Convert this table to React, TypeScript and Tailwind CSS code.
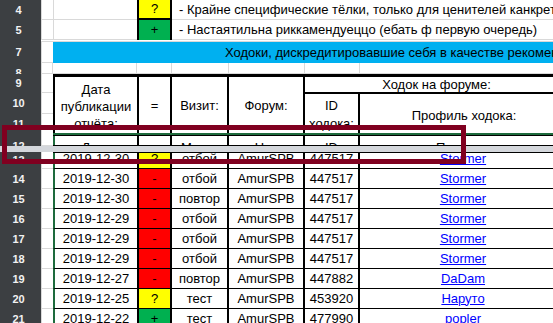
import React from "react";

const FONT = { fontFamily: '"Liberation Sans", Arial, sans-serif' };

function RowHdr({ n, h = "h-[20px]", align = "items-center" }: { n: string; h?: string; align?: string }) {
  return (
    <div
      className={`w-[41px] shrink-0 ${h} bg-[#3c3f42] text-[#f2f2f2] font-bold text-[11px] flex ${align} justify-center pr-[4px] overflow-hidden`}
    >
      <div className="h-[20px] shrink-0 flex items-center">{n}</div>
    </div>
  );
}

function ColA({ h = "h-[20px]" }: { h?: string }) {
  return <div className={`w-[12px] shrink-0 ${h} bg-white border-l border-[#d9d9d9] border-b`} />;
}

type RowData = { n: string; date: string; mark: string; visit: string; id: string; name: string };

function Cells({ r }: { r: RowData }) {
  const markBg = r.mark === "?" ? "bg-[#ffff00]" : r.mark === "+" ? "bg-[#00b050]" : "bg-[#ff0000]";
  const cell = "h-[20px] shrink-0 flex items-center justify-center border-b border-black border-r-2 border-r-black";
  return (
    <div className="flex">
      <div className={`${cell} w-[86px] border-l-2 border-l-[#1e6b3d]`}>{r.date}</div>
      <div className={`${cell} w-[33px] ${markBg}`}>{r.mark}</div>
      <div className={`${cell} w-[57px]`}>{r.visit}</div>
      <div className={`${cell} w-[76px]`}>AmurSPB</div>
      <div className={`${cell} w-[55px]`}>{r.id}</div>
      <div className={`${cell} w-[208px]`}>
        <span className="text-[#0000ff] underline">{r.name}</span>
      </div>
    </div>
  );
}

function DataRow({ r }: { r: RowData }) {
  return (
    <div className="flex h-[20px]">
      <RowHdr n={r.n} />
      <ColA />
      <Cells r={r} />
    </div>
  );
}

const rows: RowData[] = [
  { n: "14", date: "2019-12-30", mark: "-", visit: "отбой", id: "447517", name: "Stormer" },
  { n: "15", date: "2019-12-30", mark: "-", visit: "повтор", id: "447517", name: "Stormer" },
  { n: "16", date: "2019-12-29", mark: "-", visit: "отбой", id: "447517", name: "Stormer" },
  { n: "17", date: "2019-12-29", mark: "-", visit: "отбой", id: "447517", name: "Stormer" },
  { n: "18", date: "2019-12-29", mark: "-", visit: "отбой", id: "447517", name: "Stormer" },
  { n: "19", date: "2019-12-27", mark: "-", visit: "повтор", id: "447882", name: "DaDam" },
  { n: "20", date: "2019-12-25", mark: "?", visit: "тест", id: "453920", name: "Наруто" },
  { n: "21", date: "2019-12-22", mark: "+", visit: "тест", id: "477990", name: "popler" },
];

const row13: RowData = { n: "13", date: "2019-12-30", mark: "?", visit: "отбой", id: "447517", name: "Stormer" };

export default function App() {
  const grid = "border-[#d9d9d9]";
  const hc = "shrink-0 flex items-center justify-center text-center border-r-2 border-black leading-[17px]";
  const c12 = "h-[23px] shrink-0 flex items-center justify-center border-r-2 border-black";
  return (
    <div
      className="relative w-[553px] h-[323px] overflow-hidden bg-white text-black text-[13px]"
      style={FONT}
    >
      {/* Row 4 */}
      <div className="flex h-[20px]">
        <RowHdr n="4" />
        <ColA />
        <div className={`w-[84px] shrink-0 border-l border-b ${grid}`} />
        <div className="w-[35px] shrink-0 bg-[#ffff00] border-x-2 border-b-2 border-black flex items-center justify-center">
          ?
        </div>
        <div className={`flex-1 flex items-center pl-[7px] whitespace-nowrap overflow-hidden border-b ${grid}`}>
          - Крайне специфические тёлки, только для ценителей канкретно этого
        </div>
      </div>
      {/* Row 5 */}
      <div className="flex h-[20px]">
        <RowHdr n="5" />
        <ColA />
        <div className={`w-[84px] shrink-0 border-l border-b ${grid}`} />
        <div className="w-[35px] shrink-0 bg-[#00b050] border-x-2 border-black flex items-center justify-center">
          +
        </div>
        <div className={`flex-1 flex items-center pl-[7px] whitespace-nowrap overflow-hidden border-b ${grid}`}>
          - Настаятильна риккамендуеццо (ебать ф первую очередь)
        </div>
      </div>
      {/* hidden row 6 */}
      <div className="flex h-[2px]">
        <div className="w-[41px] shrink-0 bg-[#3c3f42]" />
        <div className={`flex-1 border-b ${grid}`} />
      </div>
      {/* Row 7 */}
      <div className="flex h-[21px]">
        <RowHdr n="7" h="h-[21px]" />
        <ColA h="h-[21px]" />
        <div className="flex-1 bg-[#00b0f0] flex items-center pl-[172px] whitespace-nowrap overflow-hidden">
          Ходоки, дискредитировавшие себя в качестве рекомендуемых
        </div>
      </div>
      {/* Row 8 */}
      <div className="flex h-[11px]">
        <RowHdr n="8" h="h-[11px]" align="items-start" />
        <div className={`w-[12px] shrink-0 border-l border-r border-b ${grid}`} />
        <div className={`w-[84px] shrink-0 border-r border-b ${grid}`} />
        <div className={`w-[35px] shrink-0 border-r border-b ${grid}`} />
        <div className={`w-[57px] shrink-0 border-r border-b ${grid}`} />
        <div className={`w-[76px] shrink-0 border-r border-b ${grid}`} />
        <div className={`w-[55px] shrink-0 border-r border-b ${grid}`} />
        <div className={`flex-1 border-b ${grid}`} />
      </div>
      {/* Header rows 9-11 */}
      <div className="flex h-[62px]">
        <div className="w-[41px] shrink-0 bg-[#3c3f42] text-[#f2f2f2] font-bold text-[11px] flex flex-col pr-[4px] overflow-hidden">
          <div className="h-[19px] shrink-0 flex items-center justify-center">9</div>
          <div className="h-[21px] shrink-0 flex items-center justify-center">10</div>
          <div className="h-[21px] shrink-0 flex items-center justify-center">11</div>
        </div>
        <div className={`w-[12px] shrink-0 border-l ${grid} flex flex-col`}>
          <div className={`h-[19px] border-b ${grid}`} />
          <div className={`h-[21px] border-b ${grid}`} />
          <div className={`h-[22px]`} />
        </div>
        <div className="flex flex-col">
          <div className="flex h-[59px] border-t-[3px] border-black">
            <div className={`${hc} w-[86px] border-l-2 pt-[2px]`}>
              Дата
              <br />
              публикации
              <br />
              отчёта:
            </div>
            <div className={`${hc} w-[33px]`}>=</div>
            <div className={`${hc} w-[57px]`}>Визит:</div>
            <div className={`${hc} w-[76px]`}>Форум:</div>
            <div className="w-[263px] shrink-0 flex flex-col">
              <div className="h-[17px] shrink-0 flex items-center justify-center border-b-2 border-black pt-[1px]">
                Ходок на форуме:
              </div>
              <div className="flex flex-1">
                <div className={`${hc} w-[55px] leading-[18px] pt-[3px]`}>
                  ID
                  <br />
                  ходока:
                </div>
                <div className="flex-1 flex items-center justify-center pt-[4px]">Профиль ходока:</div>
              </div>
            </div>
          </div>
          <div className="h-[2px] bg-[#1e6b3d]" />
          <div className="h-[1px] bg-black" />
        </div>
      </div>
      {/* Row 12 (clipped by freeze) */}
      <div className="flex h-[10px]">
        <RowHdr n="12" h="h-[10px]" align="items-start" />
        <ColA h="h-[10px]" />
        <div className="flex flex-col">
          <div className="h-[9px] overflow-hidden flex items-start">
            <div className={`${c12} w-[86px] border-l-2 border-l-[#1e6b3d]`}>Дата</div>
            <div className={`${c12} w-[33px]`}>=</div>
            <div className={`${c12} w-[57px]`}>Метка</div>
            <div className={`${c12} w-[76px]`}>Ник</div>
            <div className={`${c12} w-[55px]`}>ID</div>
            <div className="h-[23px] w-[208px] shrink-0 flex items-center justify-center">Профиль</div>
          </div>
          <div className="h-[1px] bg-black" />
        </div>
      </div>
      {/* Freeze band */}
      <div className="h-[6px] bg-[#d4d7dc]" />
      {/* Row 13 (partially scrolled) */}
      <div className="flex h-[17px]">
        <RowHdr n="13" h="h-[17px]" />
        <ColA h="h-[17px]" />
        <div className="flex flex-col">
          <div className="h-[1px] bg-black" />
          <div className="h-[16px] overflow-hidden flex items-end">
            <Cells r={row13} />
          </div>
        </div>
      </div>
      {rows.map((r) => (
        <DataRow key={r.n} r={r} />
      ))}
      {/* Annotation rectangle */}
      <div className="absolute left-[2px] top-[125px] w-[464px] h-[39px] border-[5px] border-[#800020]" />
    </div>
  );
}
